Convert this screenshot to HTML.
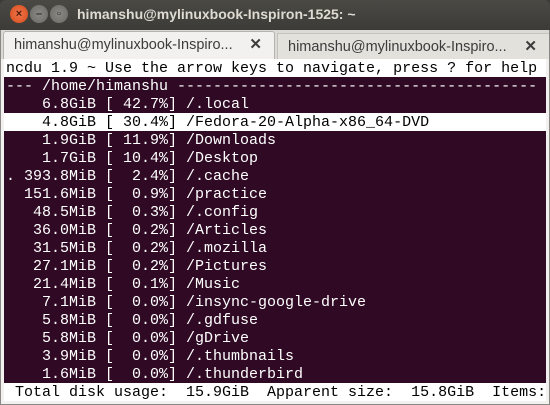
<!DOCTYPE html>
<html><head><meta charset="utf-8"><style>
*{margin:0;padding:0;box-sizing:border-box}
body{width:550px;height:405px;overflow:hidden;background:#3c3b37;font-family:"Liberation Sans",sans-serif;position:relative}
.title{position:absolute;left:0;top:0;width:550px;height:30px;background:linear-gradient(#4a4944,#3c3b37);border-radius:6px 6px 0 0}
.title .t{position:absolute;left:77px;top:6px;color:#dfdbd2;font-weight:bold;font-size:14px}
.btn{position:absolute;top:5px;width:18px;height:18px;border-radius:50%;font-size:11px;line-height:18px;text-align:center;font-weight:bold}
.b1{left:10px;background:radial-gradient(#f0744a,#d64d1c);color:#4a1a0a}
.b2{left:30px;background:radial-gradient(#8a8984,#6a6964);color:#2e2d2a}
.b3{left:50px;background:radial-gradient(#8a8984,#6a6964);color:#2e2d2a}
.tabs{position:absolute;left:0;top:30px;width:550px;height:29px;background:#dcdad5;border-left:1px solid #8a8884;border-right:1px solid #8a8884}
.tab{position:absolute;top:1px;height:28px;font-size:14.5px;color:#3c3c3c;padding:5px 0 0 10px}
.ta{left:2px;width:272px;background:#f2f1f0;border:1px solid #b5b3ae;border-bottom:none;border-radius:3px 3px 0 0}
.tb{left:276px;width:272px;background:#e3e1dc;border-top:1px solid #c5c3be;border-left:1px solid #c5c3be;top:3px}
.x{position:absolute;right:12px;top:3px;font-weight:bold;font-size:15px;color:#3c3c3c}
.term{position:absolute;left:0;top:59px;width:550px;height:346px;background:#f2f1f0;border-left:1px solid #8a8884;border-right:1px solid #8a8884;border-bottom:1px solid #8a8884}
.in{position:absolute;left:3px;top:0;width:542px;height:342px;background:#300a24;font-family:"Liberation Mono",monospace;font-size:15px;color:#fff;white-space:pre}
.r{height:18px;line-height:19px;padding-left:2px}
.w{background:#fff;color:#000}
</style></head><body>
<div class="title"><div class="btn b1">×</div><div class="btn b2">–</div><div class="btn b3">▫</div><div class="t">himanshu@mylinuxbook-Inspiron-1525: ~</div></div>
<div class="tabs"><div class="tab ta">himanshu@mylinuxbook-Inspiro...<span class="x">✕</span></div><div class="tab tb">himanshu@mylinuxbook-Inspiro...<span class="x">✕</span></div></div>
<div class="term"><div class="in"><div class="r w">ncdu 1.9 ~ Use the arrow keys to navigate, press ? for help</div><div class="r">--- /home/himanshu ----------------------------------------</div><div class="r">    6.8GiB [ 42.7%] /.local</div><div class="r w">    4.8GiB [ 30.4%] /Fedora-20-Alpha-x86_64-DVD                </div><div class="r">    1.9GiB [ 11.9%] /Downloads</div><div class="r">    1.7GiB [ 10.4%] /Desktop</div><div class="r">. 393.8MiB [  2.4%] /.cache</div><div class="r">  151.6MiB [  0.9%] /practice</div><div class="r">   48.5MiB [  0.3%] /.config</div><div class="r">   36.0MiB [  0.2%] /Articles</div><div class="r">   31.5MiB [  0.2%] /.mozilla</div><div class="r">   27.1MiB [  0.2%] /Pictures</div><div class="r">   21.4MiB [  0.1%] /Music</div><div class="r">    7.1MiB [  0.0%] /insync-google-drive</div><div class="r">    5.8MiB [  0.0%] /.gdfuse</div><div class="r">    5.8MiB [  0.0%] /gDrive</div><div class="r">    3.9MiB [  0.0%] /.thumbnails</div><div class="r">    1.6MiB [  0.0%] /.thunderbird</div><div class="r w"> Total disk usage:  15.9GiB  Apparent size:  15.8GiB  Items: </div></div></div>
</body></html>
